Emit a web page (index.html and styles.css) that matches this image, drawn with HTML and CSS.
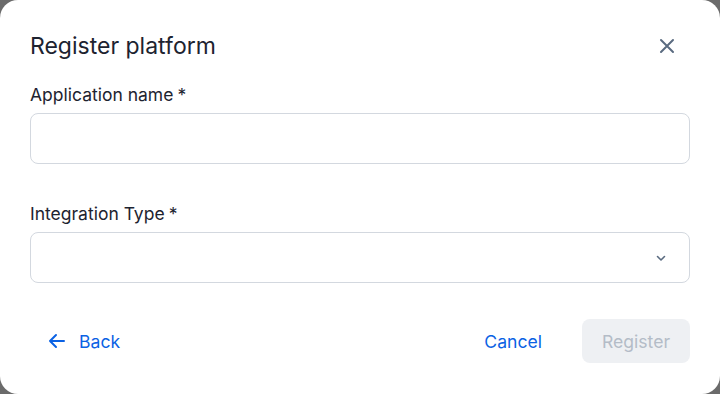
FILE: index.html
```html
<!DOCTYPE html>
<html>
<head>
<meta charset="utf-8">
<link rel="stylesheet" href="styles.css">
</head>
<body>
<div class="dialog">
  <div class="header">
    <h1 class="title">Register platform</h1>
    <button class="close" aria-label="Close">
      <svg width="16" height="16" viewBox="0 0 16 16"><path d="M2 2L14 14M14 2L2 14" stroke="#5a6b80" stroke-width="2" stroke-linecap="round"/></svg>
    </button>
  </div>
  <div class="field">
    <label class="label">Application name<span class="req">*</span></label>
    <div class="input"></div>
  </div>
  <div class="field second">
    <label class="label">Integration Type<span class="req">*</span></label>
    <div class="input select">
      <svg width="12" height="12" viewBox="0 0 12 12"><path d="M2.5 4.5L6 8L9.5 4.5" fill="none" stroke="#5a6b80" stroke-width="1.6" stroke-linecap="round" stroke-linejoin="round"/></svg>
    </div>
  </div>
  <div class="footer">
    <button class="btn-link back">
      <svg width="20" height="20" viewBox="0 0 20 20"><path d="M17 10H3M9 4L3 10L9 16" fill="none" stroke="#0b62e4" stroke-width="2" stroke-linecap="round" stroke-linejoin="round"/></svg>
      <span>Back</span>
    </button>
    <div class="actions">
      <button class="btn-link">Cancel</button>
      <button class="btn-disabled">Register</button>
    </div>
  </div>
</div>
</body>
</html>
```
FILE: styles.css
```css
html, body {
  margin: 0;
  padding: 0;
  background: #6b6b6b;
  font-family: Inter, "Noto Sans", sans-serif;
}
.dialog {
  width: 720px;
  height: 394px;
  box-sizing: border-box;
  background: #fff;
  border-radius: 18px;
  padding: 24px 30px 31px;
  display: flex;
  flex-direction: column;
}
.header {
  height: 44px;
  display: flex;
  align-items: center;
  justify-content: space-between;
}
.title {
  margin: 0;
  font-size: 23px;
  font-weight: 400;
  color: #1d2330;
}
.close {
  border: 0;
  background: none;
  padding: 0;
  width: 32px;
  height: 32px;
  margin-right: 7px;
  display: flex;
  align-items: center;
  justify-content: center;
}
.field {
  display: flex;
  flex-direction: column;
  margin-top: 14px;
}
.field.second {
  margin-top: 37px;
}
.label {
  font-size: 17.5px;
  line-height: 25px;
  color: #1d2330;
  margin-bottom: 6px;
}
.req {
  margin-left: 4px;
}
.input {
  height: 51px;
  box-sizing: border-box;
  border: 1px solid #d3d8df;
  border-radius: 8px;
}
.select {
  display: flex;
  align-items: center;
  justify-content: flex-end;
  padding-right: 22px;
}
.footer {
  margin-top: auto;
  display: flex;
  align-items: center;
  justify-content: space-between;
}
.btn-link {
  border: 0;
  background: none;
  font-family: inherit;
  font-size: 17.6px;
  color: #0b62e4;
  height: 44px;
  padding: 0 18px;
  display: flex;
  align-items: center;
  gap: 12px;
}
.back {
  padding-left: 17px;
}
.actions {
  display: flex;
  align-items: center;
  gap: 22px;
}
.btn-disabled {
  border: 0;
  font-family: inherit;
  font-size: 17.6px;
  color: #b4bcc7;
  background: #eef0f3;
  border-radius: 8px;
  height: 44px;
  width: 108px;
  padding: 0;
}
```
